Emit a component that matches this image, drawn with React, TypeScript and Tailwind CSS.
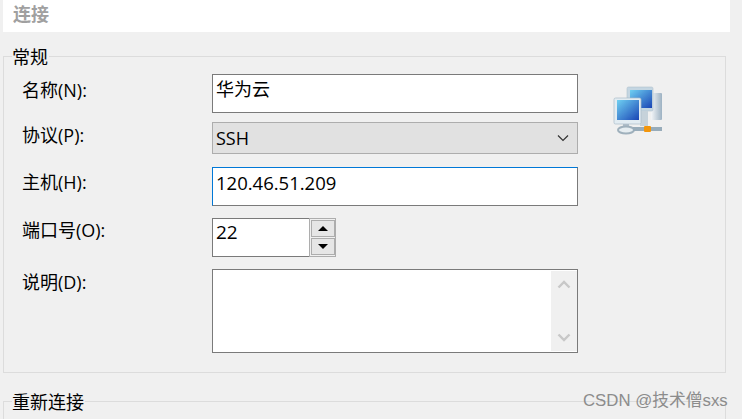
const LABEL = 'w-[190px] shrink-0 pl-[18px] text-[18px] leading-6 text-black'

function NetworkIcon() {
  return (
    <svg width="52" height="50" viewBox="0 0 52 50" className="block">
      <defs>
        <linearGradient id="scr" x1="0" y1="0" x2="1" y2="1">
          <stop offset="0" stopColor="#6fd0f2" />
          <stop offset="1" stopColor="#1a45b5" />
        </linearGradient>
        <linearGradient id="case" x1="0" y1="0" x2="1" y2="0">
          <stop offset="0" stopColor="#f4f6f8" />
          <stop offset="1" stopColor="#9db2c3" />
        </linearGradient>
        <filter id="soft">
          <feGaussianBlur stdDeviation="0.4" />
        </filter>
      </defs>
      <g filter="url(#soft)">
        <rect x="39" y="7" width="11" height="27" rx="1" fill="url(#case)" />
        <rect x="15" y="1" width="26" height="24" rx="1.5" fill="#c4d6e2" stroke="#aebfcc" strokeWidth="0.6" />
        <rect x="18" y="4" width="22" height="18" fill="url(#scr)" />
        <rect x="28" y="25" width="8" height="15" fill="#c6d2da" />
        <rect x="2" y="12" width="27" height="26" rx="1.5" fill="#e2ecf2" stroke="#a9bbc8" strokeWidth="0.7" />
        <rect x="5" y="14" width="22" height="20" fill="url(#scr)" />
        <rect x="11" y="38" width="6" height="4" fill="#aebdc8" />
        <ellipse cx="14" cy="44" rx="8" ry="3.500" fill="#e6edf1" stroke="#9fb0bc" strokeWidth="2" />
        <rect x="21" y="41" width="29" height="4" fill="#98acba" />
        <rect x="32" y="40" width="7" height="6" rx="1" fill="#f2960f" />
      </g>
    </svg>
  )
}

function SpinButton({ up }: { up?: boolean }) {
  return (
    <div className="flex h-[17px] w-6 items-center justify-center border border-[#adadad] bg-[#e6e6e6]">
      <div
        className={
          up
            ? 'h-0 w-0 border-x-[5px] border-b-[5px] border-x-transparent border-b-black'
            : 'h-0 w-0 border-x-[5px] border-t-[5px] border-x-transparent border-t-black'
        }
      />
    </div>
  )
}

export default function App() {
  return (
    <div
      className="relative h-[419px] w-[742px] overflow-hidden bg-[#f0f0f0] text-black"
      style={{ fontFamily: '"Open Sans", "Noto Sans CJK SC", sans-serif' }}
    >
      <div className="ml-[3px] h-8 w-[727px] bg-white pl-[10px] text-[18px] font-bold leading-[28px] text-[#a0a0a0]">
        连接
      </div>

      {/* 常规 group */}
      <div className="relative ml-[3px] mt-6 h-[317px] w-[723px] border border-[#dcdcdc] pt-[17px]">
        <span className="absolute -top-[11px] left-[8px] bg-[#f0f0f0] pr-px text-[18px] leading-[22px]">常规</span>

        <div className="flex items-start">
          <div className="min-w-0 flex-1">
            <div className="flex">
              <label className={`${LABEL} pt-1`}>名称(N):</label>
              <div className="ml-[18px] h-[39px] w-[366px] border border-[#7a7a7a] bg-white pl-[3px] text-[18px] leading-[29px]">
                华为云
              </div>
            </div>

            <div className="mt-[9px] flex">
              <label className={`${LABEL} pt-px`}>协议(P):</label>
              <div className="ml-[18px] flex h-8 w-[366px] items-center justify-between border border-[#adadad] bg-[#e1e1e1] pl-[3px] pr-[8px] text-[18px]">
                <span>SSH</span>
                <svg width="12" height="8" viewBox="0 0 12 8" fill="none" stroke="#333" strokeWidth="1.2">
                  <path d="M1 1.5l5 5 5-5" />
                </svg>
              </div>
            </div>

            <div className="mt-[13px] flex">
              <label className={`${LABEL} pt-[3px]`}>主机(H):</label>
              <div className="ml-[18px] h-[39px] w-[366px] border border-[#7a7a7a] border-l-[#0078d7] border-t-[#0078d7] bg-white pl-[3px] text-[18.5px] leading-[29px]">
                120.46.51.209
              </div>
            </div>

            <div className="mt-3 flex">
              <label className={`${LABEL} pt-0`}>端口号(O):</label>
              <div className="ml-[18px] flex h-[39px] w-[124px]">
                <div className="h-[39px] w-[97px] border border-r-0 border-[#7a7a7a] bg-white pl-[3px] text-[19px] leading-[27px]">
                  22
                </div>
                <div className="flex h-[39px] w-[27px] flex-col justify-center gap-px border border-[#adadad] bg-[#f0f0f0] pl-px">
                  <SpinButton up />
                  <SpinButton />
                </div>
              </div>
            </div>

            <div className="mt-3 flex">
              <label className={`${LABEL} pt-px`}>说明(D):</label>
              <div className="ml-[18px] flex h-[84px] w-[366px] justify-end border border-[#7a7a7a] bg-white">
                <div className="my-px flex w-[26px] flex-col items-center justify-between bg-[#f0f0f0] py-[9px]">
                  <svg width="14" height="9" viewBox="0 0 14 9" fill="none" stroke="#c8c8c8" strokeWidth="2.4">
                    <path d="M1.5 7.5L7 2l5.500 5.500" />
                  </svg>
                  <svg width="14" height="9" viewBox="0 0 14 9" fill="none" stroke="#c8c8c8" strokeWidth="2.4">
                    <path d="M1.5 1.500L7 7l5.500-5.500" />
                  </svg>
                </div>
              </div>
            </div>
          </div>
          <div className="mr-[61px] mt-[12px] w-[52px] shrink-0">
            <NetworkIcon />
          </div>
        </div>
      </div>

      {/* 重新连接 group, cut off by the window */}
      <div className="relative ml-[3px] mt-7 h-10 w-[723px] border border-[#dcdcdc]">
        <span className="absolute -top-[11px] left-[8px] bg-[#f0f0f0] pr-px text-[18px] leading-[22px]">重新连接</span>
      </div>

      <span className="absolute left-[583px] top-[391px] text-[16.8px] leading-5 text-[#8c8c8c]" style={{ fontFamily: '"Liberation Sans", "Noto Sans CJK SC", sans-serif' }}>
        CSDN @技术僧sxs
      </span>
    </div>
  )
}
